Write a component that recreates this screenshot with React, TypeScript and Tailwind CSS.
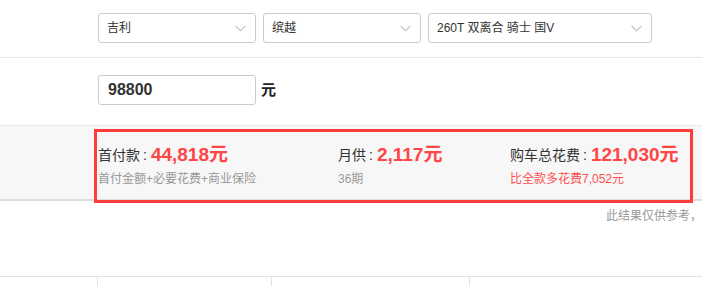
const font = "font-['Liberation_Sans','Noto_Sans_CJK_SC',sans-serif]";

function Chevron() {
  return (
    <svg width="11" height="7" viewBox="0 0 11 7" fill="none" className="shrink-0">
      <polyline points="0.5,0.8 5.5,5.8 10.5,0.8" stroke="#bdbdbd" strokeWidth="1.1" />
    </svg>
  );
}

function Select({ value, width }: { value: string; width: string }) {
  return (
    <div
      className={`${width} h-[30px] flex items-center justify-between pl-[8px] pr-[9px] border border-[#cccccc] rounded-[3px] bg-white text-[12px] text-[#333333]`}
    >
      <span>{value}</span>
      <Chevron />
    </div>
  );
}

function Stat({
  label,
  value,
  note,
  noteRed,
  width,
}: {
  label: string;
  value: string;
  note: string;
  noteRed?: boolean;
  width: string;
}) {
  return (
    <div className={`${width} flex flex-col`}>
      <div className="h-[24px] flex items-center">
        <span className="text-[14px] text-[#333333]">{label}</span>
        <span className="text-[14px] text-[#333333] ml-[3px] mr-[4px]">:</span>
        <span className="text-[19px] font-bold text-[#ff4545]">{value}</span>
      </div>
      <div
        className={`mt-[3px] h-[18px] leading-[18px] text-[12px] ${
          noteRed ? "text-[#ff5050]" : "text-[#999999]"
        }`}
      >
        {note}
      </div>
    </div>
  );
}

export default function App() {
  return (
    <div className={`${font} w-[702px] h-[286px] overflow-hidden bg-white`}>
      <div className="h-[58px] border-b border-[#e6e6e6] flex pt-[13px] pl-[98px] gap-[7px]">
        <Select value="吉利" width="w-[158px]" />
        <Select value="缤越" width="w-[158px]" />
        <Select value="260T 双离合 骑士 国V" width="w-[224px]" />
      </div>

      <div className="h-[67px] flex items-start pt-[17px] pl-[98px]">
        <div className="w-[158px] h-[30px] flex items-center pl-[9px] border border-[#cccccc] rounded-[3px] text-[16px] font-bold text-[#333333]">
          98800
        </div>
        <span className="ml-[5px] h-[30px] flex items-center text-[15px] font-bold text-[#222222]">元</span>
      </div>

      <div className="relative h-[76px] border-t border-[#e8e8e8] border-b-2 border-b-[#dedede] bg-[#f7f7f7] flex pl-[98px] pt-[17px]">
        <Stat label="首付款" value="44,818元" note="首付金额+必要花费+商业保险" width="w-[240px]" />
        <Stat label="月供" value="2,117元" note="36期" width="w-[172px]" />
        <Stat label="购车总花费" value="121,030元" note="比全款多花费7,052元" noteRed width="w-[180px]" />
        <div className="absolute left-[94px] top-[3px] w-[599px] h-[74px] border-[3px] border-[#ff3b3b]" />
      </div>

      <div className="h-[75px] pt-[6px] text-right whitespace-nowrap text-[12px] leading-[18px] text-[#999999]">
        此结果仅供参考，
      </div>

      <div className="h-[10px] border-t border-[#e3e3e3] flex">
        <div className="w-[97px]" />
        <div className="w-[174px] border-l border-[#e3e3e3]" />
        <div className="w-[198px] border-l border-[#e3e3e3]" />
        <div className="flex-1 border-l border-[#e3e3e3]" />
      </div>
    </div>
  );
}
